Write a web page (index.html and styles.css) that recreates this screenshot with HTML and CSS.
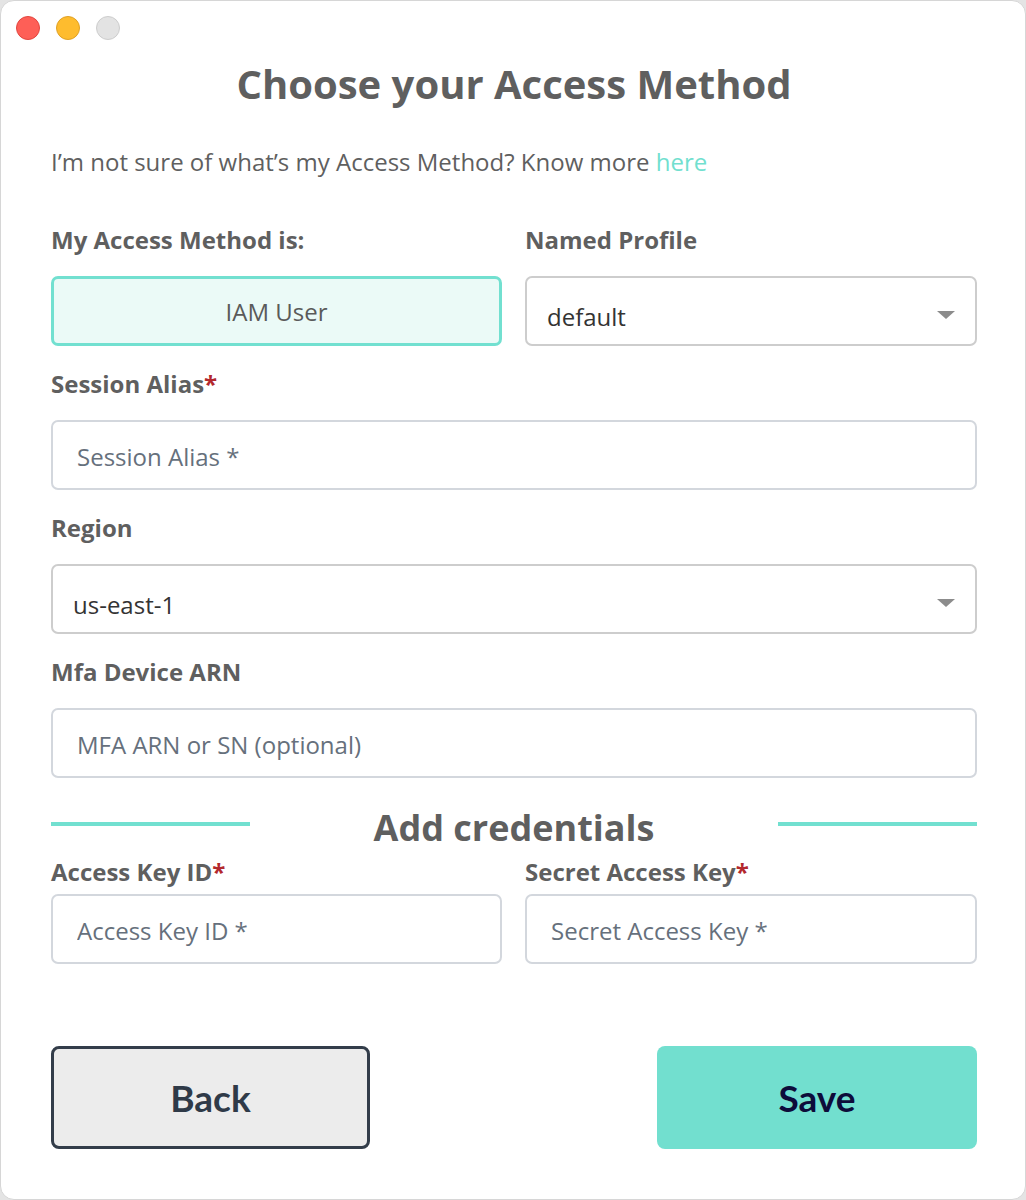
FILE: index.html
```html
<!DOCTYPE html>
<html lang="en">
<head>
<meta charset="utf-8">
<title>Choose your Access Method</title>
<link rel="stylesheet" href="styles.css">
</head>
<body>
<div class="window">
  <div class="titlebar">
    <span class="light red"></span>
    <span class="light yellow"></span>
    <span class="light gray"></span>
  </div>
  <main class="content">
    <h1 class="title">Choose your Access Method</h1>
    <p class="intro">I’m not sure of what’s my Access Method? Know more <a class="link" href="#">here</a></p>

    <div class="row">
      <div class="field">
        <label class="label">My Access Method is:</label>
        <div class="method">IAM User</div>
      </div>
      <div class="field">
        <label class="label">Named Profile</label>
        <div class="select"><span class="select-value">default</span><svg class="caret" width="18" height="8" viewBox="0 0 18 8"><path d="M0 0H18L9 8Z" fill="#8c8c8c"/></svg></div>
      </div>
    </div>

    <div class="field">
      <label class="label">Session Alias<span class="req">*</span></label>
      <input class="input" type="text" placeholder="Session Alias *">
    </div>

    <div class="field">
      <label class="label">Region</label>
      <div class="select"><span class="select-value">us-east-1</span><svg class="caret" width="18" height="8" viewBox="0 0 18 8"><path d="M0 0H18L9 8Z" fill="#8c8c8c"/></svg></div>
    </div>

    <div class="field">
      <label class="label">Mfa Device ARN</label>
      <input class="input" type="text" placeholder="MFA ARN or SN (optional)">
    </div>

    <div class="divider">
      <span class="divider-line"></span>
      <h2 class="divider-title">Add credentials</h2>
      <span class="divider-line"></span>
    </div>

    <div class="row creds">
      <div class="field">
        <label class="label">Access Key ID<span class="req">*</span></label>
        <input class="input" type="text" placeholder="Access Key ID *">
      </div>
      <div class="field">
        <label class="label">Secret Access Key<span class="req">*</span></label>
        <input class="input" type="text" placeholder="Secret Access Key *">
      </div>
    </div>

    <div class="actions">
      <button class="btn btn-back" type="button">Back</button>
      <button class="btn btn-save" type="button">Save</button>
    </div>
  </main>
</div>
</body>
</html>
```
FILE: styles.css
```css
* { box-sizing: border-box; }
html, body {
  margin: 0;
  padding: 0;
  background: #e4e4e4;
}
body {
  font-family: "Open Sans", "Liberation Sans", sans-serif;
}
.window {
  width: 1026px;
  height: 1200px;
  background: #ffffff;
  border-radius: 14px;
  border: 1px solid #d6d6d6;
  overflow: hidden;
}
.titlebar {
  display: flex;
  gap: 16px;
  padding: 15px 0 0 15px;
  height: 42px;
}
.light {
  width: 24px;
  height: 24px;
  border-radius: 50%;
  border: 1px solid;
}
.red { background: #fe5f57; border-color: #e2463f; }
.yellow { background: #febc2e; border-color: #e0a125; }
.gray { background: #e3e3e3; border-color: #cdcdcd; }

.content {
  width: 926px;
  margin: 0 0 0 50px;
  display: flex;
  flex-direction: column;
  gap: 23px;
}
.title {
  margin: 17px 0 0;
  font-size: 40px;
  line-height: 48px;
  font-weight: 700;
  color: #5f5f5f;
  text-align: center;
}
.intro {
  margin: 16px 0 0;
  font-size: 24px;
  line-height: 30px;
  color: #5f5f5f;
}
.link {
  color: #72dfcf;
  text-decoration: none;
}
.intro + .row { margin-top: 25px; }

.row {
  display: grid;
  grid-template-columns: 451px 452px;
  column-gap: 23px;
}
.field {
  display: flex;
  flex-direction: column;
  gap: 21px;
}
.label {
  font-size: 24px;
  line-height: 30px;
  font-weight: 700;
  color: #5f5f5f;
}
.req { color: #b3282d; }

.method {
  height: 70px;
  border: 3px solid #72e0d0;
  background: #ebfaf7;
  border-radius: 7px;
  display: flex;
  align-items: center;
  justify-content: center;
  font-size: 24px;
  color: #5a5a5a;
}
.select {
  height: 70px;
  border: 2px solid #cdcdcd;
  border-radius: 7px;
  display: flex;
  align-items: center;
  justify-content: space-between;
  padding: 10px 20px 0 20px;
}
.select-value {
  font-size: 24px;
  color: #333333;
}
.caret { flex: none; margin-top: -2px; }

.input {
  height: 70px;
  border: 2px solid #d3d7dd;
  border-radius: 7px;
  padding: 2px 24px 0;
  font-family: "Open Sans", "Liberation Sans", sans-serif;
  font-size: 24px;
  color: #333;
  background: #fff;
  outline: none;
}
.input::placeholder { color: #66707c; opacity: 1; }

.divider {
  display: flex;
  align-items: center;
  justify-content: space-between;
  margin-top: 5px;
  height: 44px;
}
.divider-line {
  width: 199px;
  height: 4px;
  background: #72e0d0;
  margin-top: -8px;
}
.divider-title {
  margin: 0;
  font-size: 36px;
  line-height: 44px;
  font-weight: 700;
  color: #5f5f5f;
}
.creds { margin-top: -16px; }
.creds .field { gap: 7px; }

.actions {
  display: flex;
  justify-content: space-between;
  margin-top: 59px;
}
.btn {
  width: 319px;
  height: 103px;
  border-radius: 8px;
  font-family: Lato, "Open Sans", sans-serif;
  font-weight: 700;
  font-size: 37px;
  padding: 0;
}
.btn-back {
  background: #ececec;
  border: 3px solid #333d4a;
  color: #2f3a48;
}
.btn-save {
  width: 320px;
  background: #72dfcf;
  border: none;
  color: #0d0c3a;
}
```
